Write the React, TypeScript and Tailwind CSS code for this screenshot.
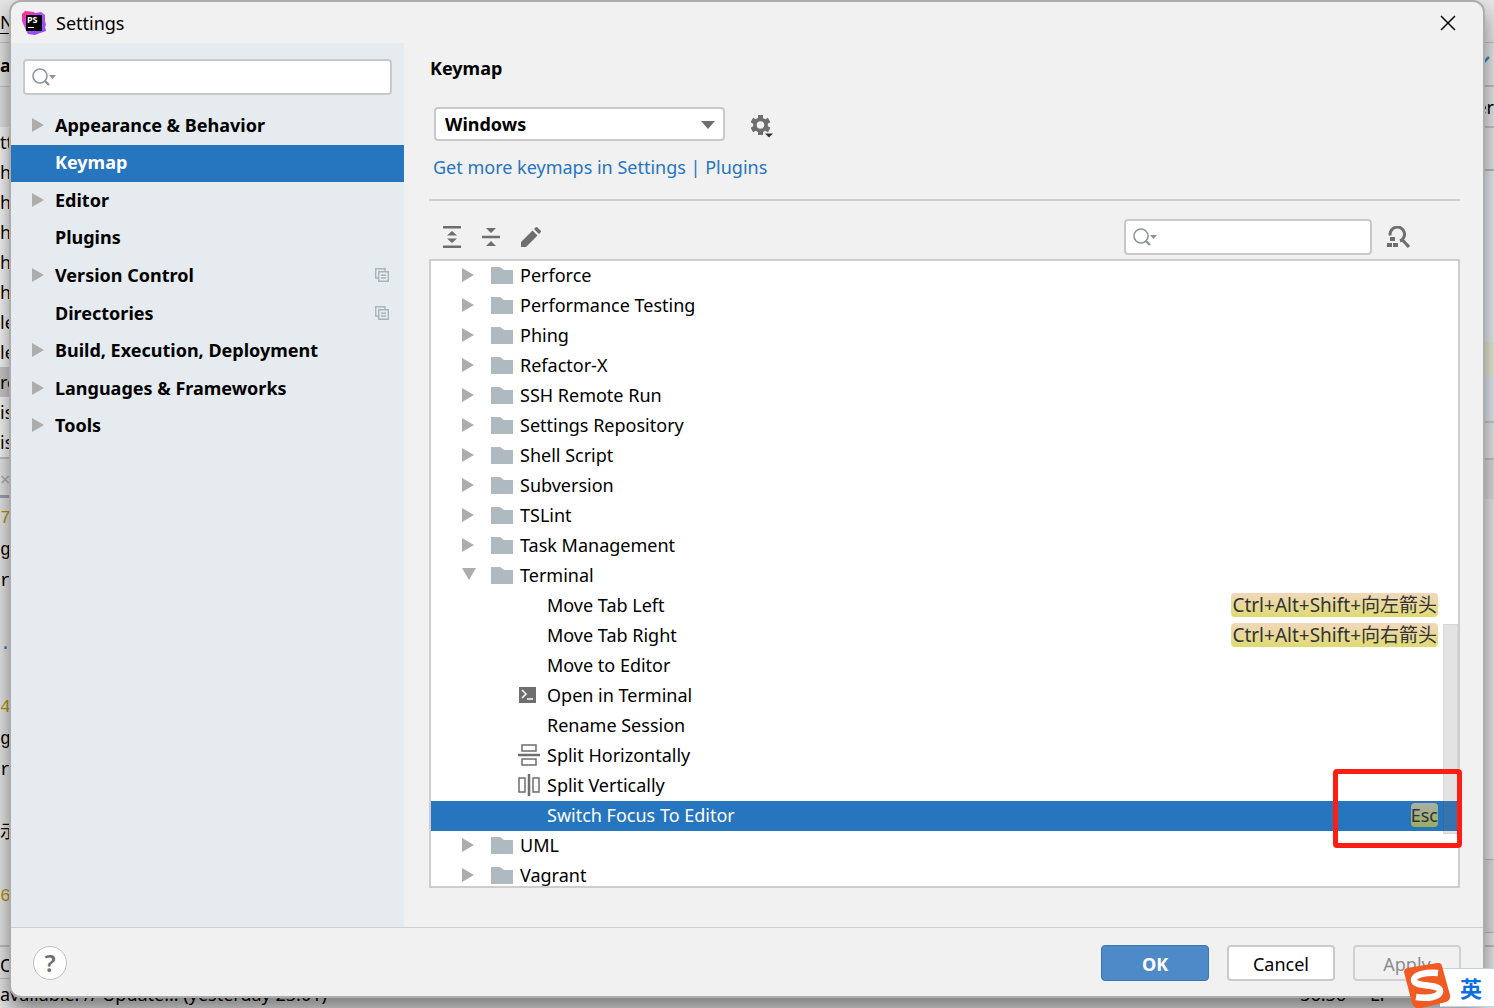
import { ReactNode } from "react";

type NavItem = { label: string; arrow?: boolean; shared?: boolean; active?: boolean };

const NAV: NavItem[] = [
  { label: "Appearance & Behavior", arrow: true },
  { label: "Keymap", active: true },
  { label: "Editor", arrow: true },
  { label: "Plugins" },
  { label: "Version Control", arrow: true, shared: true },
  { label: "Directories", shared: true },
  { label: "Build, Execution, Deployment", arrow: true },
  { label: "Languages & Frameworks", arrow: true },
  { label: "Tools", arrow: true },
];

type Action = { label: string; icon?: ReactNode; shortcut?: string; selected?: boolean };

const GROUPS_BEFORE = [
  "Perforce",
  "Performance Testing",
  "Phing",
  "Refactor-X",
  "SSH Remote Run",
  "Settings Repository",
  "Shell Script",
  "Subversion",
  "TSLint",
  "Task Management",
];

const ACTIONS: Action[] = [
  { label: "Move Tab Left", shortcut: "Ctrl+Alt+Shift+向左箭头" },
  { label: "Move Tab Right", shortcut: "Ctrl+Alt+Shift+向右箭头" },
  { label: "Move to Editor" },
  { label: "Open in Terminal", icon: <TerminalIcon /> },
  { label: "Rename Session" },
  { label: "Split Horizontally", icon: <SplitHorizontalIcon /> },
  { label: "Split Vertically", icon: <SplitVerticalIcon /> },
  { label: "Switch Focus To Editor", shortcut: "Esc", selected: true },
];

const EDITOR_LINES = ["tt", "h", "h", "ho", "h", "h", "le", "le", "re", "is", "is"];
const CONSOLE_LINES = ["73", "g", "r", "", ".", "", "47", "g1", "r", "", "示", "", "6f"];

function Logo() {
  return (
    <svg className="h-6 w-6" viewBox="0 0 24 24" aria-hidden="true">
      <defs>
        <linearGradient id="ps" x1="0" y1="0" x2="1" y2="1">
          <stop offset="0.1" stopColor="#ff318c" />
          <stop offset="0.4" stopColor="#b74af7" />
          <stop offset="1" stopColor="#7b52ff" />
        </linearGradient>
      </defs>
      <path d="M0 3 3 0l9 1 1 1 6-1 4 3v6l1 4-1 2 1 4-6 2-5 2-7-1-3-6L0 10z" fill="url(#ps)" />
      <path d="M4 4h16v16H4z" fill="#000" />
      <text x="5" y="12" fontSize="9" fontWeight="700" fill="#fff" fontFamily="Noto Sans, sans-serif">PS</text>
      <path d="M6 16h6v1H6z" fill="#fff" />
    </svg>
  );
}

function Arrow({ open = false }: { open?: boolean }) {
  return open ? (
    <svg className="h-3.5 w-3.5" viewBox="0 0 14 14" aria-hidden="true">
      <path d="M0 0h14L7 12z" fill="#adadad" />
    </svg>
  ) : (
    <svg className="h-3.5 w-3" viewBox="0 0 12 14" aria-hidden="true">
      <path d="M0 0l12 7-12 7z" fill="#adadad" />
    </svg>
  );
}

function FolderIcon() {
  return (
    <svg className="h-[17px] w-[22px]" viewBox="0 0 22 17" aria-hidden="true">
      <path d="M0 0h9l4 3h9v14H0z" fill="#afb9c0" />
    </svg>
  );
}

function SearchIcon() {
  return (
    <svg className="h-[18px] w-6" viewBox="0 0 24 18" aria-hidden="true">
      <circle cx="8" cy="8" r="7" fill="none" stroke="#8a959c" strokeWidth="1.6" />
      <path d="M12.5 12.5l4.5 4.5" stroke="#8a959c" strokeWidth="2.4" />
      <path d="M17 7h7l-3.500 4z" fill="#8a959c" />
    </svg>
  );
}

function SharedIcon() {
  return (
    <svg className="h-3.5 w-3.5" viewBox="0 0 14 14" fill="none" stroke="#a9b4bb" strokeWidth="1.4" aria-hidden="true">
      <path d="M3 10H.7V.7H10V3" />
      <path d="M3.700 3.700h9.600v9.600H3.700zM6 7.200h5M6 10h5" />
    </svg>
  );
}

function GearIcon() {
  return (
    <svg className="h-[23px] w-[22px]" viewBox="0 0 22 23" aria-hidden="true">
      <g fill="#6e6e6e">
        <path d="M7 0h5v4H7zM7 16h5v4H7z" />
        <path d="M7 0h5v4H7zM7 16h5v4H7z" transform="rotate(60 9.500 10)" />
        <path d="M7 0h5v4H7zM7 16h5v4H7z" transform="rotate(120 9.500 10)" />
      </g>
      <circle cx="9.500" cy="10" r="5.600" fill="none" stroke="#6e6e6e" strokeWidth="3.600" />
      <path d="M14 18.500h8l-4 4z" fill="#333" />
    </svg>
  );
}

function ExpandIcon() {
  return (
    <svg className="h-[22px] w-[18px]" viewBox="0 0 18 22" fill="#6e6e6e" aria-hidden="true">
      <path d="M0 0h18v2.500H0zM0 19.500h18V22H0zM9 5l5 4.500H4zM4 12.500h10L9 17z" />
    </svg>
  );
}

function CollapseIcon() {
  return (
    <svg className="h-[20px] w-[18px]" viewBox="0 0 18 20" fill="#6e6e6e" aria-hidden="true">
      <path d="M4 1h10L9 6zM0 8.800h18v2.500H0zM9 14l5 5H4z" />
    </svg>
  );
}

function PencilIcon() {
  return (
    <svg className="h-5 w-5" viewBox="0 0 20 20" fill="#6e6e6e" aria-hidden="true">
      <path d="M0 15 11.500 3.500l5 5L5 20H0zM13 2l1.500-1.500q1-1 2 0l3 3q1 1 0 2L18 7z" />
    </svg>
  );
}

function FindShortcutIcon() {
  return (
    <svg className="h-[22px] w-[23px]" viewBox="0 0 23 22" aria-hidden="true">
      <path d="M3.200 9.500a7.200 7.200 0 1 1 9.800 5.500" fill="none" stroke="#6e6e6e" strokeWidth="3" />
      <path d="M15 13.500l7 7.500" stroke="#6e6e6e" strokeWidth="3.200" />
      <path d="M3 11h5v4H3zM0 17h5v4H0zM6 17h5v4H6z" fill="#6e6e6e" />
    </svg>
  );
}

function TerminalIcon() {
  return (
    <svg className="ml-px h-4 w-[17px]" viewBox="0 0 17 16" aria-hidden="true">
      <path d="M0 0h17v16H0z" fill="#6e6e6e" />
      <path d="M3 3l4 4-4 4M8 12h6" fill="none" stroke="#fff" strokeWidth="1.500" />
    </svg>
  );
}

function SplitHorizontalIcon() {
  return (
    <svg className="h-[22px] w-[22px]" viewBox="0 0 22 22" fill="none" stroke="#6e6e6e" strokeWidth="1.500" aria-hidden="true">
      <path d="M4 1h14v6H4zM4 15h14v6H4z" />
      <path d="M0 11h22" strokeWidth="2.500" />
    </svg>
  );
}

function SplitVerticalIcon() {
  return (
    <svg className="h-[22px] w-[22px]" viewBox="0 0 22 22" fill="none" stroke="#6e6e6e" strokeWidth="1.500" aria-hidden="true">
      <path d="M1 4h6v14H1zM15 4h6v14h-6z" />
      <path d="M11 0v22" strokeWidth="2.500" />
    </svg>
  );
}

function SearchBox({ label }: { label: string }) {
  return (
    <label className="flex h-9 w-full items-center rounded border-2 border-[#c9c9c9] bg-white pl-[7px]">
      <SearchIcon />
      <input type="text" aria-label={label} className="ml-1 min-w-0 flex-1 bg-transparent outline-none" />
    </label>
  );
}

// The IDE window that stays visible around the dialog
function IdeWindow() {
  return (
    <div className="absolute inset-0 flex flex-col overflow-hidden bg-[#e4e4e4]" aria-hidden="true">
      <div className="flex min-h-0 flex-1 justify-between">
        <div className="w-6 whitespace-nowrap">
          <div className="h-[43px] border-b border-[#c0c0c0] pt-2.5 underline underline-offset-4">N</div>
          <div className="h-11 border-b border-[#c0c0c0] pt-2.5 font-bold">ar</div>
          <div className="h-10 bg-[#e0e0e0]" />
          <ul className="bg-[#f3f3f3]">
            {EDITOR_LINES.map((line, i) => (
              <li key={i} className={`h-[30px] leading-[30px] ${i === 8 ? "bg-[#c8c8c8]" : ""}`}>{line}</li>
            ))}
          </ul>
          <div className="h-[38px] border-t-2 border-[#c0c0c0] pt-2 text-[#aaa]">×</div>
          <div className="h-[3px] bg-[#98a3b5]" />
          <ul className="mt-2 flex h-[410px] flex-col">
            {CONSOLE_LINES.map((line, i) => (
              <li
                key={i}
                className={`flex-1 font-['Liberation_Mono','Noto_Sans_CJK_SC',monospace] ${/^\d/.test(line) ? "text-[#b5940a]" : line === "." ? "text-[#2675bf]" : ""}`}
              >
                {line}
              </li>
            ))}
          </ul>
        </div>
        <div className="flex w-[14px] flex-col whitespace-nowrap">
          <div className="h-[43px] border-b border-[#c0c0c0]" />
          <div className="h-11 border-b-2 border-[#c0c0c0] pt-3">
            <svg className="h-3 w-3.5" viewBox="0 0 14 12">
              <path d="M2 9l7-7" stroke="#3592c4" strokeWidth="2.500" />
            </svg>
          </div>
          <div className="flex h-[41px] justify-end border-b-2 border-[#c0c0c0] pt-2">er</div>
          <div className="h-[43px] border-b-2 border-[#b8b8b8]" />
          <div className="h-[171px] bg-[#e4e9ef]" />
          <div className="h-8 bg-[#e6e7d4]" />
          <div className="h-[49px] border-b-2 border-[#c8c8c8] bg-[#e0e6ec]" />
          <div className="h-[37px] border-b-2 border-[#c0c0c0]" />
          <div className="h-[39px] bg-[#d9d9d9]" />
          <div className="h-[361px] border-b border-[#b8b8b8]" />
          <div className="h-[73px] border-b border-[#b8b8b8] bg-[#dcdcdc]" />
        </div>
      </div>
      <div className="h-[33px] border-t-2 border-[#bdbdbd] pt-1.5">OC</div>
      <div className="flex h-[30px] items-center justify-between border-t border-[#bdbdbd] pr-[68px]">
        <span>available. // Update... (yesterday 23:01)</span>
        <span className="flex gap-6">
          <span>56:56</span>
          <span>LF</span>
          <span>G</span>
        </span>
      </div>
    </div>
  );
}

function InputMethodBar() {
  return (
    <div className="absolute right-0 bottom-0 flex h-[45px] items-end">
      <svg className="z-10 -mr-3 h-[45px] w-12" viewBox="0 0 48 45" aria-hidden="true">
        <path d="M3 5 33 0q4-1 5 3l8 29q1 5-4 7l-24 6q-8 2-10-5L0 9q0-3 3-4z" fill="#f15a22" />
        <path
          d="M34 10C24 9 10 11 10 17c0 8 26 3 26 11 0 6-12 8-24 6"
          fill="none"
          stroke="#fff"
          strokeWidth="6.500"
          strokeLinecap="butt"
        />
      </svg>
      <div className="mb-px flex h-[39px] w-[54px] items-center border-y border-[#c5d4e4] bg-white pl-5 text-[22px] font-bold text-[#0a6fdc]">
        英
      </div>
    </div>
  );
}

function Sidebar() {
  return (
    <nav className="w-[393px] shrink-0 bg-[#e6ebef]" aria-label="Settings categories">
      <div className="px-3 pt-4">
        <SearchBox label="Search settings" />
      </div>
      <ul className="mt-3 flex h-[338px] flex-col font-bold">
        {NAV.map((item) => (
          <li key={item.label} className="flex flex-1">
            <button
              type="button"
              className={`flex flex-1 items-center pr-[15px] pb-0.5 pl-[21px] text-left ${item.active ? "bg-[#2675bf] text-white" : ""}`}
            >
              <span className="w-[23px]">{item.arrow && <Arrow />}</span>
              <span className="flex-1">{item.label}</span>
              {item.shared && <SharedIcon />}
            </button>
          </li>
        ))}
      </ul>
    </nav>
  );
}

function GroupRow({ label, open }: { label: string; open?: boolean }) {
  return (
    <li role="treeitem" aria-expanded={!!open} className="flex h-[30px] shrink-0 items-center pb-0.5 pl-[31px]">
      <span className="w-[29px]">
        <Arrow open={open} />
      </span>
      <FolderIcon />
      <span className="ml-[7px]">{label}</span>
    </li>
  );
}

function ActionRow({ action }: { action: Action }) {
  return (
    <li
      role="treeitem"
      aria-selected={!!action.selected}
      className={`flex h-[30px] shrink-0 items-center pr-5 pb-0.5 pl-[87px] ${action.selected ? "bg-[#2675bf] text-white" : ""}`}
    >
      <span className="w-[29px]">{action.icon}</span>
      <span className="flex-1">{action.label}</span>
      {action.shortcut && (
        <kbd
          className={`h-6 rounded font-[inherit] leading-6 text-[#333] ${action.selected ? "bg-linear-to-b from-[#abafa4] to-[#9bad5e] text-[18px]" : "bg-linear-to-b from-[#f1d8bb] to-[#dfda71] px-px text-[19px]"}`}
        >
          {action.shortcut}
        </kbd>
      )}
    </li>
  );
}

function KeymapTree() {
  return (
    <div className="relative flex min-h-0 flex-1 flex-col border-2 border-[#cdcdcd] bg-white">
      <ul role="tree" aria-label="Actions" className="flex min-h-0 flex-1 flex-col overflow-hidden">
        {GROUPS_BEFORE.map((label) => (
          <GroupRow key={label} label={label} />
        ))}
        <GroupRow label="Terminal" open />
        {ACTIONS.map((action) => (
          <ActionRow key={action.label} action={action} />
        ))}
        <GroupRow label="UML" />
        <GroupRow label="Vagrant" />
      </ul>
      <div className="absolute top-[363px] right-0 h-[210px] w-[15px] border border-black/5 bg-[#737373]/20" />
      <div className="absolute top-[508px] -right-1 h-[79px] w-[129px] rounded border-[5px] border-[#ff1d14]" />
    </div>
  );
}

function KeymapPage() {
  return (
    <main className="flex min-w-0 flex-1 flex-col pt-3 pr-[23px] pb-[39px] pl-[25px]">
      <h1 className="pl-px leading-[26px] font-bold">Keymap</h1>
      <div className="mt-[26px] flex items-center pl-[5px]">
        <div className="relative h-[34px] w-[291px]">
          <select
            aria-label="Keymap scheme"
            className="h-full w-full appearance-none rounded border-2 border-[#c9c9c9] bg-white pl-[9px] font-bold outline-none"
          >
            <option>Windows</option>
          </select>
          <svg className="pointer-events-none absolute top-3.5 right-2.5 h-2 w-3.5" viewBox="0 0 14 8" aria-hidden="true">
            <path d="M0 0h14L7 8z" fill="#6e6e6e" />
          </svg>
        </div>
        <button type="button" aria-label="Keymap options" className="ml-[26px] pt-1">
          <GearIcon />
        </button>
      </div>
      <p className="mt-3 pl-1 leading-7">
        <a href="#plugins" className="text-[#2675bf]">Get more keymaps in Settings | Plugins</a>
      </p>
      <hr className="mt-[18px] border-t-2 border-[#cdcdcd]" />
      <div className="flex items-center pt-[18px] pb-1 pl-3.5">
        <div className="flex items-center gap-[21px]">
          <button type="button" aria-label="Expand all"><ExpandIcon /></button>
          <button type="button" aria-label="Collapse all"><CollapseIcon /></button>
          <button type="button" aria-label="Edit shortcut"><PencilIcon /></button>
        </div>
        <div className="ml-auto w-[248px]">
          <SearchBox label="Search actions" />
        </div>
        <button type="button" aria-label="Find actions by shortcut" className="mr-[50px] ml-[15px]">
          <FindShortcutIcon />
        </button>
      </div>
      <KeymapTree />
    </main>
  );
}

export default function App() {
  return (
    <div className="relative flex h-screen flex-col overflow-hidden px-[9px] pb-2.5 font-['Noto_Sans','Noto_Sans_CJK_SC',sans-serif] text-[18px] leading-6 text-black">
      <IdeWindow />
      <div
        role="dialog"
        aria-label="Settings"
        className="relative flex min-h-0 flex-1 flex-col overflow-hidden rounded-xl border-2 border-[#adadad] bg-[#f1f1f1] shadow-[0_12px_20px_rgba(0,0,0,0.45)]"
      >
        <header className="flex h-[41px] shrink-0 items-center pr-[27px] pl-[11px]">
          <Logo />
          <span className="ml-2.5 flex-1">Settings</span>
          <button type="button" aria-label="Close">
            <svg className="h-4 w-4" viewBox="0 0 16 16" stroke="#000" strokeWidth="1.500" aria-hidden="true">
              <path d="M1 1l14 14M15 1 1 15" />
            </svg>
          </button>
        </header>
        <div className="flex min-h-0 flex-1">
          <Sidebar />
          <KeymapPage />
        </div>
        <footer className="flex h-[69px] shrink-0 items-center border-t border-[#cfcfcf] pt-0.5 pr-[22px] pl-[22px]">
          <button
            type="button"
            aria-label="Help"
            className="flex h-[34px] w-[34px] items-center justify-center rounded-full border border-[#c0c0c0] bg-white text-[24px] font-semibold text-[#6e6e6e]"
          >
            ?
          </button>
          <div className="ml-auto flex gap-[18px]">
            <button type="button" className="h-9 w-[108px] rounded border border-[#3a76b5] bg-[#4e89c8] pt-0.5 font-bold text-white">OK</button>
            <button type="button" className="h-9 w-[108px] rounded border-2 border-[#cacaca] bg-white pt-0.5">Cancel</button>
            <button type="button" disabled className="h-9 w-[108px] rounded border-2 border-[#d0d0d0] pt-0.5 text-[#8c8c8c]">Apply</button>
          </div>
        </footer>
      </div>
      <InputMethodBar />
    </div>
  );
}
